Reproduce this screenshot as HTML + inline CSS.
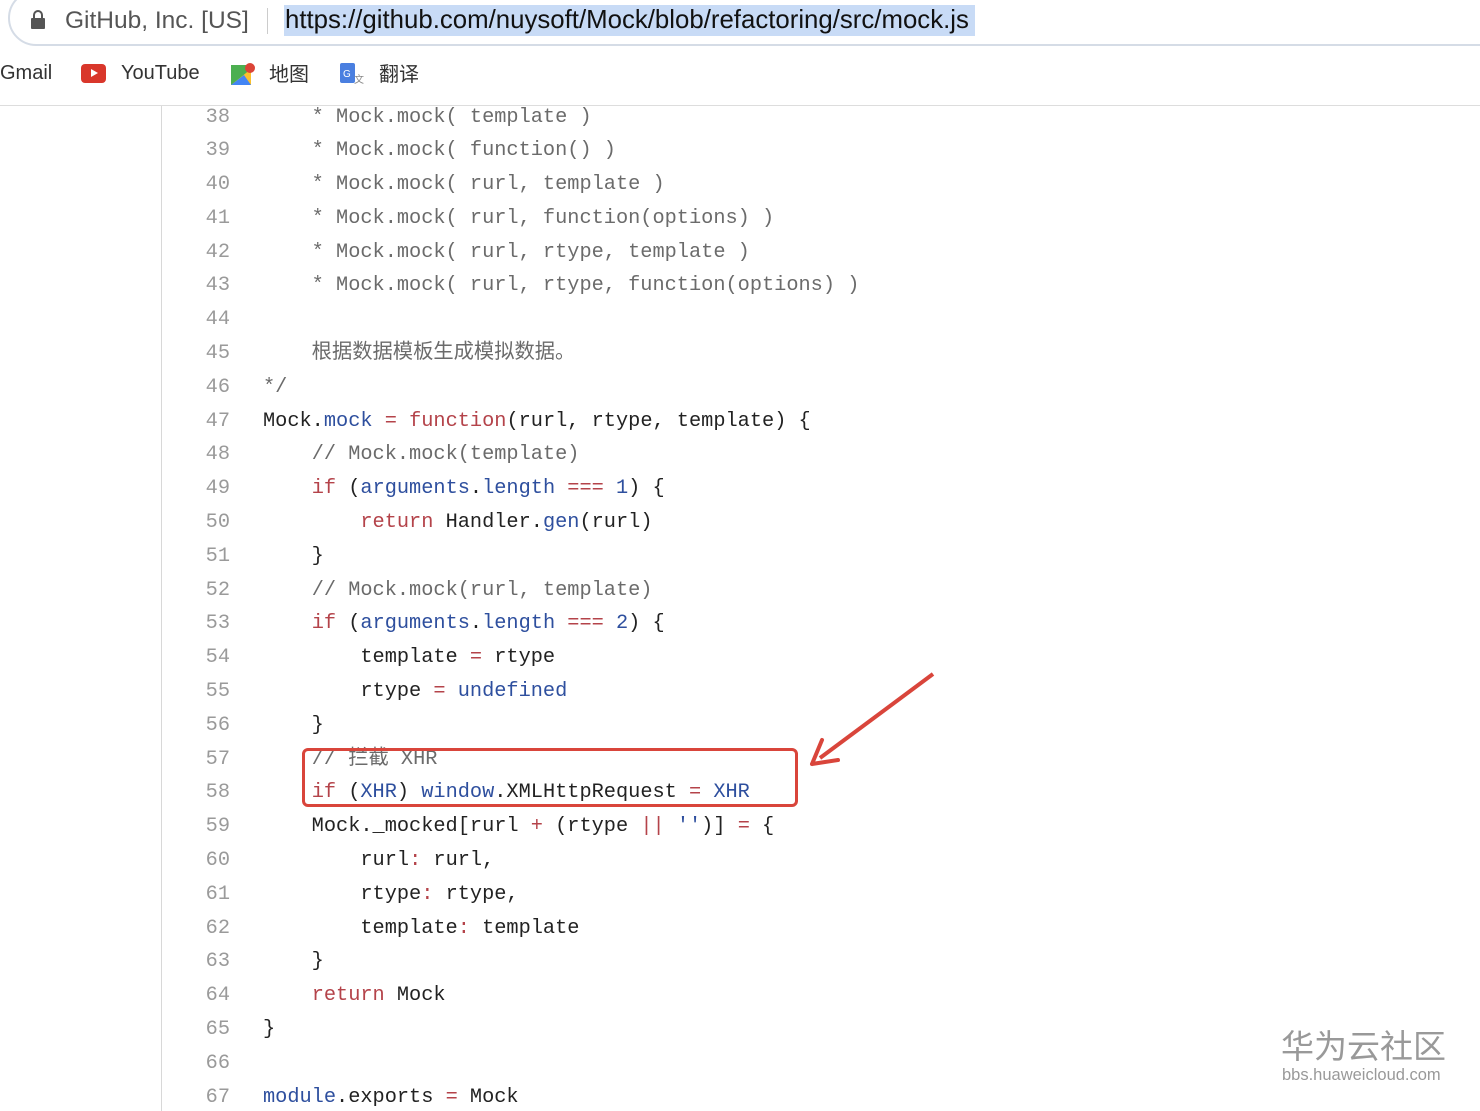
<!DOCTYPE html>
<html><head><meta charset="utf-8"><style>
body{margin:0;width:1480px;height:1110px;background:#fff;position:relative;overflow:hidden;font-family:"Liberation Sans","Noto Sans CJK SC",sans-serif}
.addr{position:absolute;left:8px;top:-10px;width:1500px;height:52px;border:2px solid #d5dce6;border-radius:28px;background:#fff}
.t{position:absolute;font-size:22px;color:#333;white-space:nowrap}
.code{position:absolute;left:0;top:105px;width:1480px;height:1005px;overflow:hidden;border-top:1px solid #ddd}
.gut{position:absolute;left:161px;top:0;width:1px;height:1010px;background:#d8d8d8}
pre{margin:0;position:absolute;top:-5.5px;font-family:"Liberation Mono","Noto Sans CJK SC",monospace;font-size:20.3px;line-height:33.8px;color:#222}
.ln{left:180px;width:50px;text-align:right;color:#9a9a9a}
.src{left:263px}
.k{color:#b4434a}.b{color:#2e4f9e}.c{color:#6b6b6b}
</style></head><body>
<div class="addr"></div>
<svg style="position:absolute;left:30px;top:10px" width="16" height="20"><rect x="1" y="8" width="14" height="11" rx="1" fill="#555"/><path d="M4 8V5a4 4 0 0 1 8 0v3" stroke="#555" stroke-width="2" fill="none"/></svg>
<div class="t" style="left:65px;top:7px;color:#555;font-size:24.5px">GitHub, Inc. [US]</div>
<div style="position:absolute;left:267px;top:8px;width:1px;height:26px;background:#ccc"></div>
<div style="position:absolute;left:284px;top:5px;width:691px;height:31px;background:#c8dbf6"></div>
<div class="t" style="left:285px;top:6px;color:#111;font-size:25.8px">https://github.com/nuysoft/Mock/blob/refactoring/src/mock.js</div>
<div class="t" style="left:0;top:62px;font-size:20px">Gmail</div>
<div style="position:absolute;left:81px;top:64px;width:25px;height:19px;background:#d9372b;border-radius:4px"></div>
<div style="position:absolute;left:91px;top:69px;width:0;height:0;border-left:7px solid #fff;border-top:4.5px solid transparent;border-bottom:4.5px solid transparent"></div>
<div class="t" style="left:121px;top:62px;font-size:20px">YouTube</div>
<svg style="position:absolute;left:230px;top:61px" width="26" height="26"><rect x="1" y="4" width="20" height="20" fill="#4caf50"/><path d="M1 24L21 8V24z" fill="#fbc02d"/><path d="M1 24L14 14L21 24z" fill="#4285f4"/><circle cx="20" cy="7" r="5" fill="#db4437"/></svg>
<div class="t" style="left:269px;top:58px;font-size:20px">地图</div>
<svg style="position:absolute;left:339px;top:61px" width="26" height="26"><rect x="1" y="2" width="15" height="20" rx="2" fill="#4a7fe0"/><text x="4" y="16" font-size="10" fill="#fff" font-family="Liberation Sans">G</text><text x="15" y="22" font-size="10" fill="#888" font-family="Liberation Sans">文</text></svg>
<div class="t" style="left:379px;top:58px;font-size:20px">翻译</div>
<div class="code"><div class="gut"></div>
<pre class="ln">38
39
40
41
42
43
44
45
46
47
48
49
50
51
52
53
54
55
56
57
58
59
60
61
62
63
64
65
66
67</pre>
<pre class="src"><span class="c">    * Mock.mock( template )
    * Mock.mock( function() )
    * Mock.mock( rurl, template )
    * Mock.mock( rurl, function(options) )
    * Mock.mock( rurl, rtype, template )
    * Mock.mock( rurl, rtype, function(options) )

    根据数据模板生成模拟数据。
*/</span>
Mock.<span class="b">mock</span> <span class="k">=</span> <span class="k">function</span>(rurl, rtype, template) {
    <span class="c">// Mock.mock(template)</span>
    <span class="k">if</span> (<span class="b">arguments</span>.<span class="b">length</span> <span class="k">===</span> <span class="b">1</span>) {
        <span class="k">return</span> Handler.<span class="b">gen</span>(rurl)
    }
    <span class="c">// Mock.mock(rurl, template)</span>
    <span class="k">if</span> (<span class="b">arguments</span>.<span class="b">length</span> <span class="k">===</span> <span class="b">2</span>) {
        template <span class="k">=</span> rtype
        rtype <span class="k">=</span> <span class="b">undefined</span>
    }
    <span class="c">// 拦截 XHR</span>
    <span class="k">if</span> (<span class="b">XHR</span>) <span class="b">window</span>.XMLHttpRequest <span class="k">=</span> <span class="b">XHR</span>
    Mock._mocked[rurl <span class="k">+</span> (rtype <span class="k">||</span> <span class="b">''</span>)] <span class="k">=</span> {
        rurl<span class="k">:</span> rurl,
        rtype<span class="k">:</span> rtype,
        template<span class="k">:</span> template
    }
    <span class="k">return</span> Mock
}

<span class="b">module</span>.exports <span class="k">=</span> Mock</pre>
</div>
<div style="position:absolute;left:302px;top:748px;width:490px;height:53px;border:3px solid #d9453b;border-radius:6px"></div>
<svg style="position:absolute;left:0;top:0" width="1480" height="1110"><path d="M933 674L820 758" stroke="#d9453b" stroke-width="4" fill="none"/><path d="M812 764L822 740M812 764L838 760" stroke="#d9453b" stroke-width="4" fill="none" stroke-linecap="round"/></svg>
<div class="t" style="left:1281px;top:1025px;font-size:33px;color:#999;line-height:44px">华为云社区</div>
<div class="t" style="left:1282px;top:1065px;font-size:16.5px;color:#999;line-height:20px">bbs.huaweicloud.com</div>
</body></html>
